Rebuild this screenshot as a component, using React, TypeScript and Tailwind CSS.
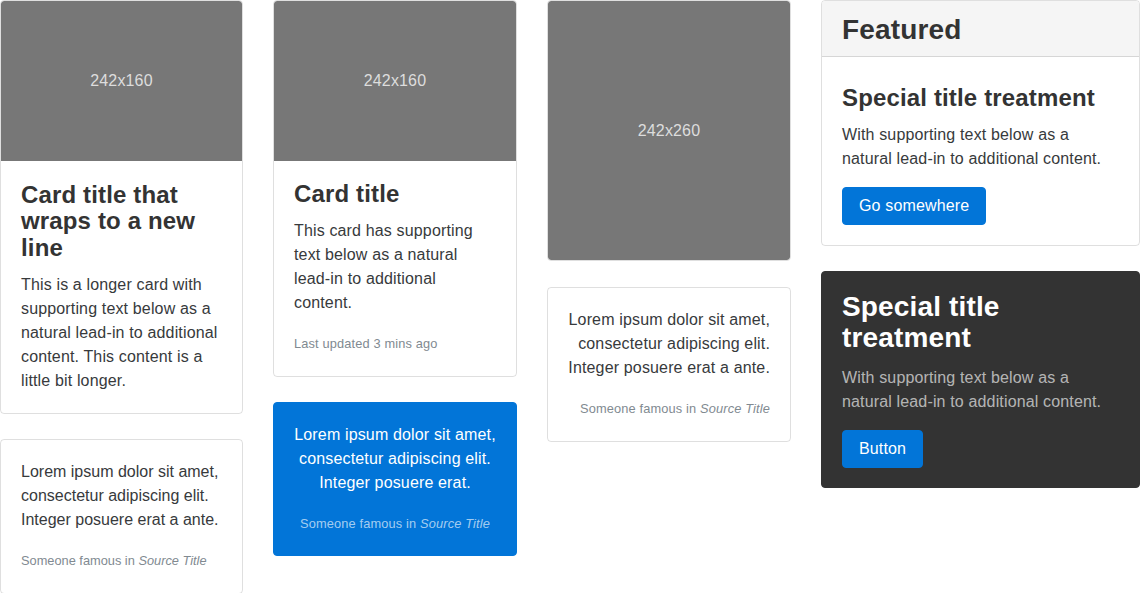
import React from "react";

const Placeholder = ({ h, label, rounded }: { h: number; label: string; rounded: string }) => (
  <div
    className={`flex items-center justify-center bg-[#777777] text-[16px] text-[#dddddd] ${rounded}`}
    style={{ height: h }}
  >
    {label}
  </div>
);

const Card = ({ children, className = "" }: { children: React.ReactNode; className?: string }) => (
  <div className={`overflow-hidden rounded-[4px] border border-[rgba(0,0,0,0.125)] ${className}`}>{children}</div>
);

export default function App() {
  return (
    <div
      className="grid h-[593px] w-[1140px] grid-cols-[243px_244px_244px_319px] items-start gap-x-[30px] overflow-hidden bg-white text-[16px] leading-[24px] tracking-[0.15px] text-[#373a3c]"
      style={{ fontFamily: '"Liberation Sans", Arial, sans-serif' }}
    >
      {/* Column 1 */}
      <div className="flex flex-col gap-[25px]">
        <Card>
          <Placeholder h={160} label="242x160" rounded="rounded-t-[3px]" />
          <div className="p-[20px] pt-[21px]">
            <h4 className="mb-[12px] text-[24px] font-bold leading-[1.1] text-[#333]">
              Card title that wraps to a new line
            </h4>
            <p>
              This is a longer card with supporting text below as a natural lead-in to additional content. This
              content is a little bit longer.
            </p>
          </div>
        </Card>
        <Card className="tracking-normal">
          <div className="p-[20px]">
            <blockquote>
              <p className="mb-[16px]">Lorem ipsum dolor sit amet, consectetur adipiscing elit. Integer posuere erat a ante.</p>
              <footer>
                <small className="text-[12.8px] text-[#818a91]">
                  Someone famous in <cite className="italic">Source Title</cite>
                </small>
              </footer>
            </blockquote>
          </div>
        </Card>
      </div>

      {/* Column 2 */}
      <div className="flex flex-col gap-[25px]">
        <Card>
          <Placeholder h={160} label="242x160" rounded="rounded-t-[3px]" />
          <div className="p-[20px]">
            <h4 className="mb-[12px] text-[24px] font-bold leading-[1.1] text-[#333]">Card title</h4>
            <p className="mb-[16px]">
              This card has supporting text below as a natural lead-in to additional content.
            </p>
            <p>
              <small className="text-[12.8px] text-[#818a91]">Last updated 3 mins ago</small>
            </p>
          </div>
        </Card>
        <div className="rounded-[4px] border border-[#0275d8] bg-[#0275d8] p-[20px] pb-[19px] text-center text-white">
          <blockquote>
            <p className="mb-[16px]">Lorem ipsum dolor sit amet, consectetur adipiscing elit. Integer posuere erat.</p>
            <footer>
              <small className="text-[12.8px] text-[rgba(255,255,255,0.65)]">
                Someone famous in <cite className="italic">Source Title</cite>
              </small>
            </footer>
          </blockquote>
        </div>
      </div>

      {/* Column 3 */}
      <div className="flex flex-col gap-[26px]">
        <Card>
          <Placeholder h={259} label="242x260" rounded="rounded-[3px]" />
        </Card>
        <Card>
          <div className="p-[20px] text-right">
            <blockquote>
              <p className="mb-[16px]">Lorem ipsum dolor sit amet, consectetur adipiscing elit. Integer posuere erat a ante.</p>
              <footer>
                <small className="text-[12.8px] text-[#818a91]">
                  Someone famous in <cite className="italic">Source Title</cite>
                </small>
              </footer>
            </blockquote>
          </div>
        </Card>
      </div>

      {/* Column 4 */}
      <div className="flex flex-col gap-[25px]">
        <Card>
          <div className="border-b border-[rgba(0,0,0,0.125)] bg-[#f5f5f5] px-[20px] pb-[10px] pt-[14px]">
            <h3 className="text-[28px] font-bold leading-[1.1] text-[#333]">Featured</h3>
          </div>
          <div className="p-[20px] pt-[28px]">
            <h4 className="mb-[12px] text-[24px] font-bold leading-[1.1] text-[#333]">Special title treatment</h4>
            <p className="mb-[16px]">With supporting text below as a natural lead-in to additional content.</p>
            <button className="rounded-[4px] border border-[#0275d8] bg-[#0275d8] px-[16px] py-[6px] text-[16px] leading-[24px] text-white">
              Go somewhere
            </button>
          </div>
        </Card>
        <div className="rounded-[4px] border border-[#333] bg-[#333] p-[20px] pb-[19px]">
          <h3 className="mb-[12px] text-[28px] font-bold leading-[1.1] text-white">Special title treatment</h3>
          <p className="mb-[16px] text-[rgba(255,255,255,0.65)]">
            With supporting text below as a natural lead-in to additional content.
          </p>
          <button className="rounded-[4px] border border-[#0275d8] bg-[#0275d8] px-[16px] py-[6px] text-[16px] leading-[24px] text-white">
            Button
          </button>
        </div>
      </div>
    </div>
  );
}
